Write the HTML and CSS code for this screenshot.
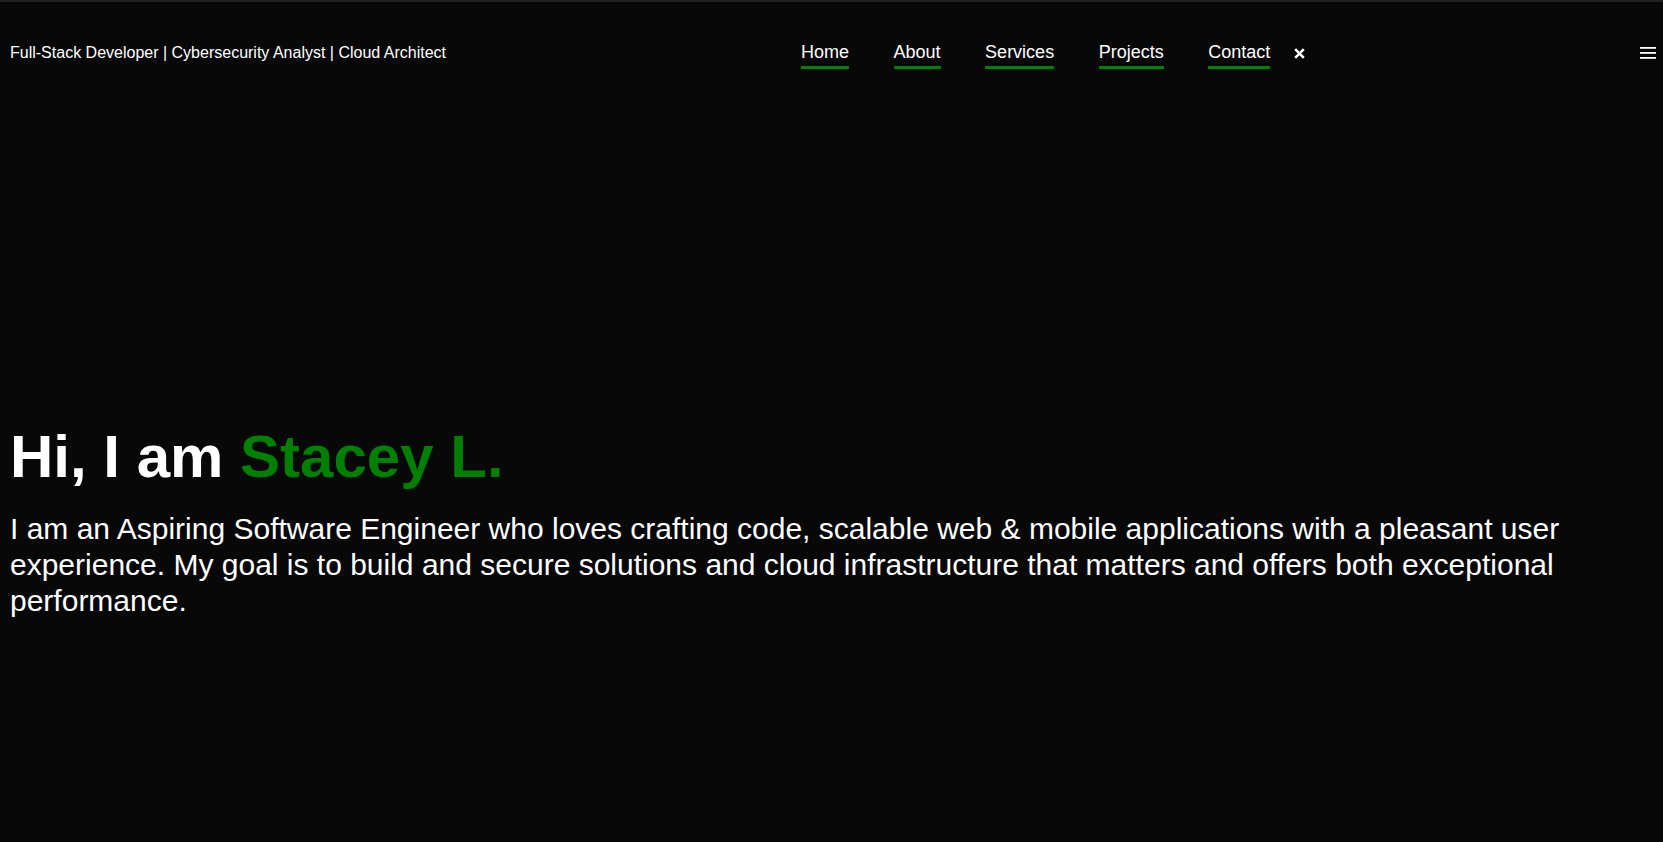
FILE: index.html
```html
<!DOCTYPE html>
<html lang="en">
<head>
<meta charset="utf-8">
<title>Stacey L. — Portfolio</title>
<link rel="stylesheet" href="styles.css">
</head>
<body>
<header class="site-header">
  <p class="tagline">Full-Stack Developer | Cybersecurity Analyst | Cloud Architect</p>
  <nav class="main-nav">
    <ul class="nav-list">
      <li><a class="nav-link" href="#home">Home</a></li>
      <li><a class="nav-link" href="#about">About</a></li>
      <li><a class="nav-link" href="#services">Services</a></li>
      <li><a class="nav-link" href="#projects">Projects</a></li>
      <li><a class="nav-link" href="#contact">Contact</a></li>
    </ul>
    <button class="close-btn" aria-label="Close menu">
      <svg width="11" height="11" viewBox="0 0 11 11"><path d="M1.2 1.2L9.8 9.8M9.8 1.2L1.2 9.8" stroke="#fff" stroke-width="2.5" stroke-linecap="butt"/></svg>
    </button>
  </nav>
  <button class="menu-btn" aria-label="Open menu">
    <svg width="16" height="12" viewBox="0 0 16 12"><rect x="0" y="0" width="16" height="1.8" fill="#fff"/><rect x="0" y="5" width="16" height="1.8" fill="#fff"/><rect x="0" y="10" width="16" height="1.8" fill="#fff"/></svg>
  </button>
</header>
<main class="hero">
  <h1 class="hero-title">Hi, I am <span class="accent">Stacey L.</span></h1>
  <p class="hero-text">I am an Aspiring Software Engineer who loves crafting code, scalable web &amp; mobile applications with a pleasant user experience. My goal is to build and secure solutions and cloud infrastructure that matters and offers both exceptional performance.</p>
</main>
</body>
</html>
```
FILE: styles.css
```css
html, body {
  margin: 0;
  padding: 0;
  background: #080808;
  color: #ffffff;
  font-family: "Liberation Sans", Arial, sans-serif;
  height: 100%;
}
body {
  border-top: 2px solid #1f1f1f;
  box-sizing: border-box;
}
.site-header {
  display: flex;
  align-items: flex-start;
  padding: 39px 7px 0 10px;
}
.tagline {
  margin: 2.8px 0 0 0;
  font-size: 16px;
  line-height: normal;
  white-space: nowrap;
}
.main-nav {
  display: flex;
  align-items: flex-start;
  margin-left: 355px;
}
.nav-list {
  display: flex;
  gap: 44.5px;
  list-style: none;
  margin: 0;
  padding: 0;
}
.nav-link {
  display: block;
  font-size: 18px;
  line-height: normal;
  color: #ffffff;
  text-decoration: none;
  padding: 1px 0 3px 0;
  border-bottom: 3px solid #008000;
}
.close-btn,
.menu-btn {
  background: none;
  border: 0;
  padding: 0;
  display: block;
  cursor: pointer;
}
.close-btn svg,
.menu-btn svg {
  display: block;
}
.close-btn {
  margin: 6.5px 0 0 23.5px;
}
.menu-btn {
  margin: 6px 0 0 auto;
}
.hero {
  padding: 353px 10px 0 10px;
}
.hero-title {
  margin: 0;
  font-size: 60px;
  font-weight: bold;
  line-height: normal;
}
.accent {
  color: #008000;
}
.hero-text {
  margin: 19.5px 0 0 0;
  font-size: 30px;
  line-height: 36px;
}
```
